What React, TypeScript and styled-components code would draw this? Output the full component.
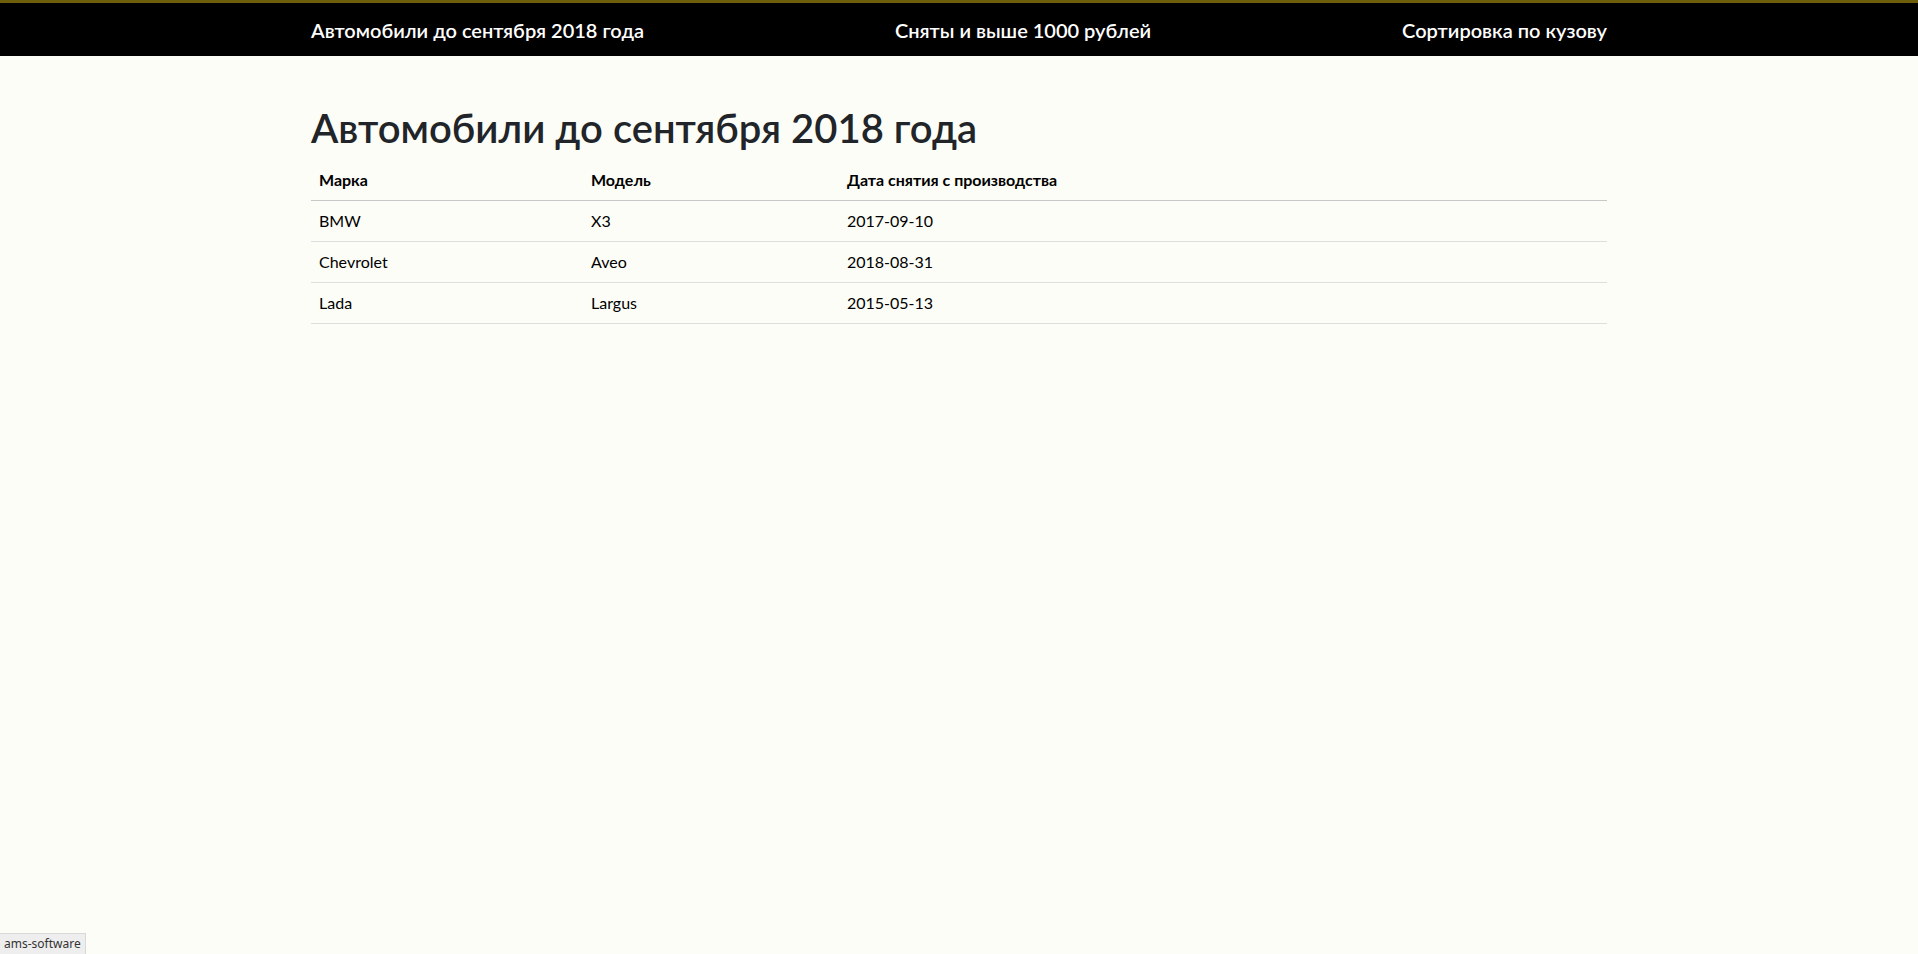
import React from "react";
import styled, { createGlobalStyle } from "styled-components";

const GlobalStyle = createGlobalStyle`
  html, body {
    margin: 0;
    padding: 0;
    background: #fdfdf7;
    color: #212529;
    font-family: Lato, "Noto Sans", sans-serif;
  }
  #root {
    min-height: 954px;
  }
`;

const cars = [
  { brand: "BMW", model: "X3", date: "2017-09-10" },
  { brand: "Chevrolet", model: "Aveo", date: "2018-08-31" },
  { brand: "Lada", model: "Largus", date: "2015-05-13" },
];

const navLinks = [
  "Автомобили до сентября 2018 года",
  "Сняты и выше 1000 рублей",
  "Сортировка по кузову",
];

const App = () => {
  return (
    <Page>
      <GlobalStyle />
      <Navbar>
        <Container>
          <NavList>
            {navLinks.map((link) => (
              <NavLink key={link} href="#">
                {link}
              </NavLink>
            ))}
          </NavList>
        </Container>
      </Navbar>

      <Main>
        <Container>
          <Title>Автомобили до сентября 2018 года</Title>
          <Table>
            <thead>
              <tr>
                <Th $width="272px">Марка</Th>
                <Th $width="256px">Модель</Th>
                <Th>Дата снятия с производства</Th>
              </tr>
            </thead>
            <tbody>
              {cars.map((car) => (
                <tr key={car.brand}>
                  <Td>{car.brand}</Td>
                  <Td>{car.model}</Td>
                  <Td>{car.date}</Td>
                </tr>
              ))}
            </tbody>
          </Table>
        </Container>
      </Main>

      <StatusBar>ams-software</StatusBar>
    </Page>
  );
};

const Page = styled.div`
  min-height: 954px;
  position: relative;
`;

const Navbar = styled.nav`
  background: #000;
  border-top: 3px solid #6e5f0c;
  height: 53px;
  display: flex;
  align-items: center;
`;

const Container = styled.div`
  width: 1296px;
  margin: 0 auto;
`;

const NavList = styled.div`
  display: flex;
  justify-content: space-between;
  align-items: center;
`;

const NavLink = styled.a`
  color: #fff;
  font-size: 20px;
  font-weight: 600;
  text-decoration: none;
`;

const Main = styled.main`
  padding-top: 48px;
`;

const Title = styled.h1`
  font-size: 40px;
  font-weight: 600;
  line-height: 1.2;
  margin: 0 0 8px;
  color: #212529;
`;

const Table = styled.table`
  width: 100%;
  table-layout: fixed;
  border-collapse: collapse;
  font-size: 16px;
  color: #000;
`;

const Th = styled.th<{ $width?: string }>`
  box-sizing: border-box;
  text-align: left;
  font-weight: 700;
  padding: 8px;
  line-height: 24px;
  width: ${(p) => p.$width || "auto"};
  border-bottom: 1px solid #c8c8c8;
`;

const Td = styled.td`
  padding: 8px;
  line-height: 24px;
  border-bottom: 1px solid #dedede;
`;

const StatusBar = styled.div`
  position: fixed;
  left: 0;
  bottom: 0;
  padding: 1px 4px 2px;
  background: #eeeeee;
  border-top: 1px solid #d8d8d8;
  border-right: 1px solid #d8d8d8;
  font-size: 12px;
  color: #333;
  font-family: "Noto Sans", sans-serif;
`;

export default App;
